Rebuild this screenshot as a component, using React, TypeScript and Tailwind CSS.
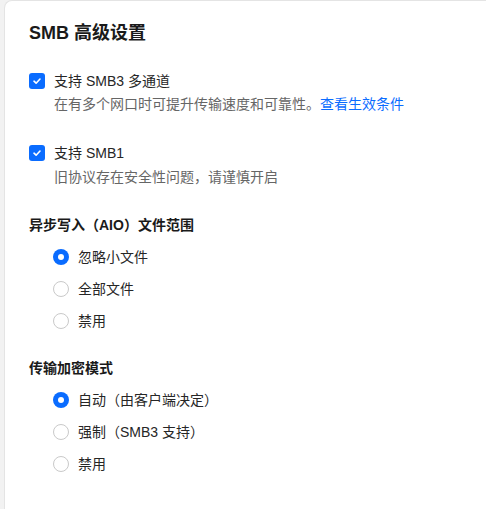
import React, { useState } from 'react';

const FONT = { fontFamily: '"Liberation Sans", "Noto Sans CJK SC", sans-serif' };

interface Option {
    id: string;
    label: string;
}

const AIO_OPTIONS: Option[] = [
    { id: 'small', label: '忽略小文件' },
    { id: 'all', label: '全部文件' },
    { id: 'off', label: '禁用' },
];

const ENCRYPT_OPTIONS: Option[] = [
    { id: 'auto', label: '自动（由客户端决定）' },
    { id: 'force', label: '强制（SMB3 支持）' },
    { id: 'off', label: '禁用' },
];

const Checkbox: React.FC<{ checked: boolean; onChange: () => void }> = ({ checked, onChange }) => (
    <button
        onClick={onChange}
        className={`w-4 h-4 rounded-[3px] flex items-center justify-center shrink-0 ${
            checked ? 'bg-[#0a6cff]' : 'bg-white border border-[#c8c8c8]'
        }`}
        aria-pressed={checked}
    >
        {checked && (
            <svg width="10" height="10" viewBox="0 0 10 10" fill="none">
                <path d="M2 5.2L4.1 7.2L8 3" stroke="white" strokeWidth="1.6" strokeLinecap="round" strokeLinejoin="round" />
            </svg>
        )}
    </button>
);

const RadioGroup: React.FC<{ options: Option[]; value: string; onChange: (id: string) => void }> = ({
    options,
    value,
    onChange,
}) => (
    <div className="flex flex-col gap-[10px] pl-6">
        {options.map((opt) => {
            const selected = opt.id === value;
            return (
                <label
                    key={opt.id}
                    onClick={() => onChange(opt.id)}
                    className="flex items-center h-[22px] gap-[9px] cursor-pointer text-[14px] text-[#262626]"
                >
                    <span
                        className={`w-4 h-4 rounded-full flex items-center justify-center shrink-0 ${
                            selected ? 'bg-[#0a6cff]' : 'bg-white border border-[#c9c9c9]'
                        }`}
                    >
                        {selected && <span className="w-[6px] h-[6px] rounded-full bg-white" />}
                    </span>
                    {opt.label}
                </label>
            );
        })}
    </div>
);

export default function App() {
    const [multiChannel, setMultiChannel] = useState(true);
    const [smb1, setSmb1] = useState(true);
    const [aio, setAio] = useState('small');
    const [encrypt, setEncrypt] = useState('auto');

    return (
        <div className="flex w-[486px] h-[509px] bg-[#f2f2f2] overflow-hidden" style={FONT}>
            <div className="ml-[4px] flex-1 bg-white border-l border-t border-[#e4e4e4] rounded-tl-[8px] pl-[24px] pt-[20px]">
                <h2 className="text-[18px] leading-[24px] font-bold text-[#1a1a1a]">SMB 高级设置</h2>

                <div className="mt-[25px]">
                    <div className="flex items-center gap-[9px] h-[22px] text-[14px] text-[#262626]">
                        <Checkbox checked={multiChannel} onChange={() => setMultiChannel(!multiChannel)} />
                        支持 SMB3 多通道
                    </div>
                    <p className="pl-[25px] mt-[1px] text-[14px] leading-[22px] text-[#666]">
                        在有多个网口时可提升传输速度和可靠性。
                        <a href="#" className="text-[#0a6cff]">查看生效条件</a>
                    </p>
                </div>

                <div className="mt-[27px]">
                    <div className="flex items-center gap-[9px] h-[22px] text-[14px] text-[#262626]">
                        <Checkbox checked={smb1} onChange={() => setSmb1(!smb1)} />
                        支持 SMB1
                    </div>
                    <p className="pl-[25px] mt-[2px] text-[14px] leading-[22px] text-[#666]">
                        旧协议存在安全性问题，请谨慎开启
                    </p>
                </div>

                <div className="mt-[26px]">
                    <h3 className="text-[14px] leading-[22px] font-bold text-[#1a1a1a]">异步写入（AIO）文件范围</h3>
                    <div className="mt-[10px]">
                        <RadioGroup options={AIO_OPTIONS} value={aio} onChange={setAio} />
                    </div>
                </div>

                <div className="mt-[25px]">
                    <h3 className="text-[14px] leading-[22px] font-bold text-[#1a1a1a]">传输加密模式</h3>
                    <div className="mt-[10px]">
                        <RadioGroup options={ENCRYPT_OPTIONS} value={encrypt} onChange={setEncrypt} />
                    </div>
                </div>
            </div>
        </div>
    );
}
